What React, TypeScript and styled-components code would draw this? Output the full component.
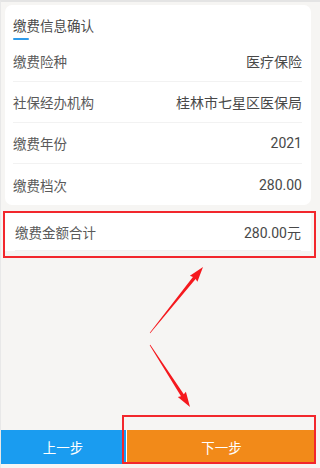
import React from 'react';
import styled, { createGlobalStyle } from 'styled-components';

const GlobalStyle = createGlobalStyle`
  html, body {
    margin: 0;
    padding: 0;
    background: #f6f5f3;
  }
  body {
    font-family: Roboto, "Noto Sans CJK SC", "Noto Sans", sans-serif;
  }
`;

const Page = styled.div`
  position: relative;
  box-sizing: border-box;
  width: 320px;
  height: 468px;
  display: flex;
  flex-direction: column;
  background: #f6f5f3;
  border-top: 2px solid #e4e4e4;
  border-left: 1px solid #e8e8e8;
  overflow: hidden;
`;

const Card = styled.section`
  margin: 3px 9px 0 4px;
  background: #fff;
  border-radius: 7px;
  padding: 0 9px 0 8px;
`;

const TitleBlock = styled.div`
  padding-top: 12px;
  height: 24px;
`;

const Title = styled.div`
  font-size: 13.5px;
  line-height: 18px;
  color: #4a4a4a;
`;

const TitleBar = styled.div`
  width: 16px;
  height: 2px;
  margin-top: 3px;
  border-radius: 1px;
  background: #2e9bea;
`;

const Row = styled.div<{ $divider?: boolean }>`
  display: flex;
  align-items: center;
  justify-content: space-between;
  height: 41px;
  box-sizing: border-box;
  border-bottom: ${(p) => (p.$divider ? '1px solid #f2f2f2' : 'none')};
  font-size: 13.5px;
  color: #5a5a5a;
`;

const Value = styled.span`
  color: #484848;
  font-size: 14px;
`;

const TotalBox = styled.section`
  margin: 8px 9px 0 4px;
  background: #fff;
  padding: 0 10px 0 10px;
`;

const TotalRow = styled.div`
  display: flex;
  align-items: center;
  justify-content: space-between;
  height: 37px;
  border-bottom: 1px solid #f1f1f1;
  font-size: 13.5px;
  color: #5a5a5a;
`;

const Spacer = styled.div`
  flex: 1;
`;

const Footer = styled.div`
  display: flex;
  height: 34px;
  margin: 0 4px 4px -1px;
  gap: 1px;
  background: #fff;
`;

const StepButton = styled.button<{ $tone: 'blue' | 'orange' }>`
  border: none;
  padding: 0;
  color: #fff;
  font-family: inherit;
  font-size: 13.5px;
  background: ${(p) => (p.$tone === 'blue' ? '#1a9cf0' : '#f28a19')};
  flex: ${(p) => (p.$tone === 'blue' ? '0 0 126px' : '1')};
  cursor: pointer;
`;

const Annotation = styled.svg`
  position: absolute;
  left: -1px;
  top: -2px;
  pointer-events: none;
`;

type Pt = [number, number];

const arrowPoints = (tail: Pt, tip: Pt) => {
  const dx = tip[0] - tail[0];
  const dy = tip[1] - tail[1];
  const len = Math.hypot(dx, dy);
  const ux = dx / len;
  const uy = dy / len;
  const nx = -uy;
  const ny = ux;
  const headLen = 14;
  const bx = tip[0] - ux * headLen;
  const by = tip[1] - uy * headLen;
  const pts: Pt[] = [
    [tail[0] + nx * 0.3, tail[1] + ny * 0.3],
    [bx + nx * 1.7, by + ny * 1.7],
    [bx + nx * 4.8 - ux * 1, by + ny * 4.8 - uy * 1],
    tip,
    [bx - nx * 4.8 - ux * 1, by - ny * 4.8 - uy * 1],
    [bx - nx * 1.7, by - ny * 1.7],
    [tail[0] - nx * 0.3, tail[1] - ny * 0.3],
  ];
  return pts.map((p) => p.map((v) => v.toFixed(1)).join(',')).join(' ');
};

const rows = [
  { label: '缴费险种', value: '医疗保险' },
  { label: '社保经办机构', value: '桂林市七星区医保局' },
  { label: '缴费年份', value: '2021' },
  { label: '缴费档次', value: '280.00' },
];

const App = () => {
  return (
    <>
      <GlobalStyle />
      <Page>
        <Card>
          <TitleBlock>
            <Title>缴费信息确认</Title>
            <TitleBar />
          </TitleBlock>
          {rows.map((r, i) => (
            <Row key={r.label} $divider={i < rows.length - 1}>
              <span>{r.label}</span>
              <Value>{r.value}</Value>
            </Row>
          ))}
        </Card>

        <TotalBox>
          <TotalRow>
            <span>缴费金额合计</span>
            <Value>280.00元</Value>
          </TotalRow>
        </TotalBox>

        <Spacer />

        <Footer>
          <StepButton $tone="blue">上一步</StepButton>
          <StepButton $tone="orange">下一步</StepButton>
        </Footer>

        <Annotation width="320" height="468" viewBox="0 0 320 468">
          <rect x="4" y="212" width="311" height="45" fill="none" stroke="#f2272c" strokeWidth="2" />
          <rect x="123" y="416" width="192" height="47" fill="none" stroke="#f2272c" strokeWidth="2" />
          <polygon points={arrowPoints([150, 333], [203, 267])} fill="#f5191e" />
          <polygon points={arrowPoints([150, 345], [190, 407])} fill="#f5191e" />
        </Annotation>
      </Page>
    </>
  );
};

export default App;
